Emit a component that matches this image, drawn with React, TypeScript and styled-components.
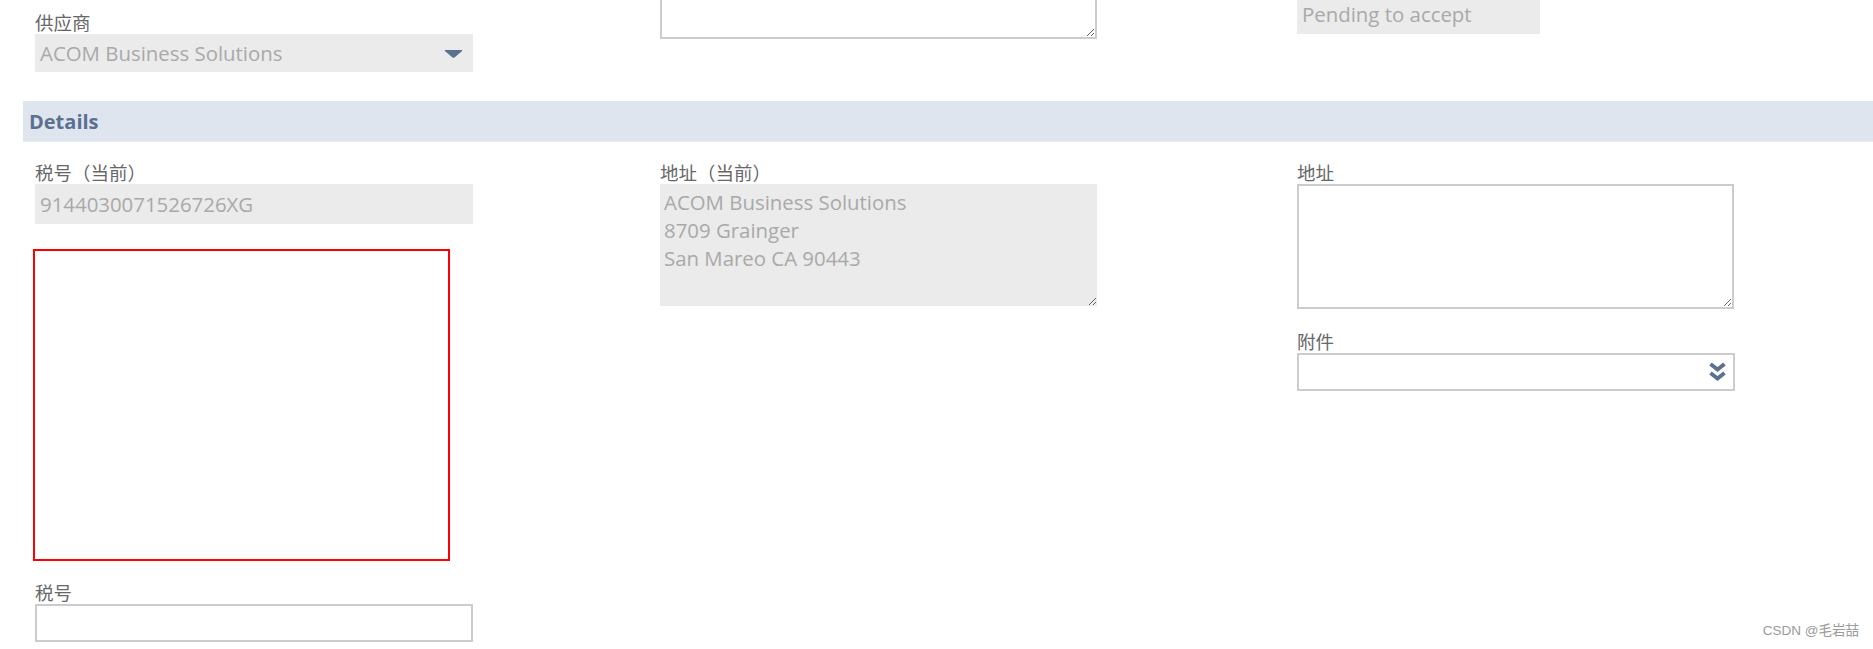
import React from 'react';
import styled, { createGlobalStyle } from 'styled-components';

const GlobalStyle = createGlobalStyle`
  html, body {
    margin: 0;
    padding: 0;
    background: #ffffff;
    overflow: hidden;
  }
  body {
    font-family: "Open Sans", "Noto Sans CJK SC", sans-serif;
  }
`;

const COLOR = {
  LABEL: '#676767',
  FIELD_BG: '#ebebeb',
  FIELD_TEXT: '#a9a9a9',
  BORDER: '#cccccc',
  ICON: '#5a7190',
  BAND: '#dfe5ee',
  BAND_TEXT: '#5b6f91',
};

function TriangleIcon() {
  return (
    <svg width="19" height="9" viewBox="0 0 19 9">
      <path d="M1 1 L18 1 Q18.5 1.5 17.5 2.5 L10.5 8.5 Q9.5 9.2 8.5 8.5 L1.5 2.5 Q0.5 1.5 1 1 Z" fill={COLOR.ICON} />
    </svg>
  );
}

function DoubleChevronIcon() {
  return (
    <svg width="19" height="22" viewBox="0 0 19 22">
      <path d="M2.5 3 L9.5 8.5 L16.5 3" fill="none" stroke={COLOR.ICON} strokeWidth="4" strokeLinejoin="miter" />
      <path d="M2.5 12 L9.5 17.5 L16.5 12" fill="none" stroke={COLOR.ICON} strokeWidth="4" strokeLinejoin="miter" />
    </svg>
  );
}

export default function App() {
  return (
    <Page>
      <GlobalStyle />
      <Columns>
        <Column $top={12}>
          <Label>供应商</Label>
          <SelectBox $disabled>
            <span>ACOM Business Solutions</span>
            <TriangleIcon />
          </SelectBox>
        </Column>
        <Column>
          <TextArea $height={80} style={{ marginTop: -41 }} />
        </Column>
        <Column>
          <ReadOnlyField $width={243} style={{ marginTop: -6 }}>Pending to accept</ReadOnlyField>
        </Column>
      </Columns>

      <Band>Details</Band>

      <Columns $top={20}>
        <Column>
          <Label>税号（当前）</Label>
          <ReadOnlyField>9144030071526726XG</ReadOnlyField>
          <Highlight />
          <Label>税号</Label>
          <TextInput />
        </Column>
        <Column>
          <Label>地址（当前）</Label>
          <TextArea
            $height={122}
            $disabled
            readOnly
            value={'ACOM Business Solutions\n8709 Grainger\nSan Mareo CA 90443'}
          />
        </Column>
        <Column>
          <Label>地址</Label>
          <TextArea $height={125} />
          <Gap />
          <Label>附件</Label>
          <SelectBox>
            <span />
            <DoubleChevronIcon />
          </SelectBox>
        </Column>
      </Columns>

      <Watermark>CSDN @毛岩喆</Watermark>
    </Page>
  );
}

const Page = styled.div`
  position: relative;
  width: 1873px;
  height: 649px;
  padding-left: 23px;
  box-sizing: border-box;
`;

const Columns = styled.div<{ $top?: number }>`
  display: grid;
  grid-template-columns: 625px 637px 1fr;
  align-items: start;
  padding-left: 12px;
  padding-top: ${(p) => p.$top ?? 0}px;
`;

const Column = styled.div<{ $top?: number }>`
  display: flex;
  flex-direction: column;
  align-items: flex-start;
  padding-top: ${(p) => p.$top ?? 0}px;
`;

const Label = styled.div`
  height: 22px;
  line-height: 22px;
  font-size: 18.5px;
  color: ${COLOR.LABEL};
  font-family: "Open Sans", "Noto Sans CJK SC", sans-serif;
`;

const SelectBox = styled.div<{ $disabled?: boolean }>`
  display: flex;
  align-items: center;
  justify-content: space-between;
  width: 438px;
  height: 38px;
  box-sizing: border-box;
  padding: 0 ${(p) => (p.$disabled ? 10 : 6)}px 0 5px;
  background: ${(p) => (p.$disabled ? COLOR.FIELD_BG : '#ffffff')};
  border: ${(p) => (p.$disabled ? 'none' : `2px solid ${COLOR.BORDER}`)};
  color: ${COLOR.FIELD_TEXT};
  font-size: 20.4px;
`;

const ReadOnlyField = styled.div<{ $width?: number }>`
  width: ${(p) => p.$width ?? 438}px;
  height: 40px;
  line-height: 40px;
  box-sizing: border-box;
  padding: 0 5px;
  background: ${COLOR.FIELD_BG};
  color: ${COLOR.FIELD_TEXT};
  font-size: 20.4px;
  white-space: nowrap;
`;

const TextArea = styled.textarea<{ $height: number; $disabled?: boolean }>`
  display: block;
  width: 437px;
  height: ${(p) => p.$height}px;
  box-sizing: border-box;
  margin: 0;
  padding: 4px 4px;
  resize: vertical;
  outline: none;
  background: ${(p) => (p.$disabled ? COLOR.FIELD_BG : '#ffffff')};
  border: ${(p) => (p.$disabled ? 'none' : `2px solid ${COLOR.BORDER}`)};
  color: ${COLOR.FIELD_TEXT};
  font-family: "Open Sans", sans-serif;
  font-size: 20.4px;
  line-height: 28px;
`;

const TextInput = styled.div`
  width: 438px;
  height: 38px;
  box-sizing: border-box;
  border: 2px solid ${COLOR.BORDER};
  background: #ffffff;
`;

const Highlight = styled.div`
  width: 417px;
  height: 312px;
  box-sizing: border-box;
  margin: 25px 0 21px -2px;
  border: 2px solid #ff0000;
`;

const Gap = styled.div`
  height: 22px;
`;

const Band = styled.div`
  height: 40px;
  margin-top: 29px;
  padding-left: 6px;
  display: flex;
  align-items: center;
  background: ${COLOR.BAND};
  border-bottom: 1px solid #e8ecf2;
  color: ${COLOR.BAND_TEXT};
  font-size: 20px;
  font-weight: 700;
`;

const Watermark = styled.div`
  position: absolute;
  right: 14px;
  bottom: 10px;
  font-family: "Liberation Sans", "Noto Sans CJK SC", sans-serif;
  font-size: 13.5px;
  color: #9a9a9a;
`;
